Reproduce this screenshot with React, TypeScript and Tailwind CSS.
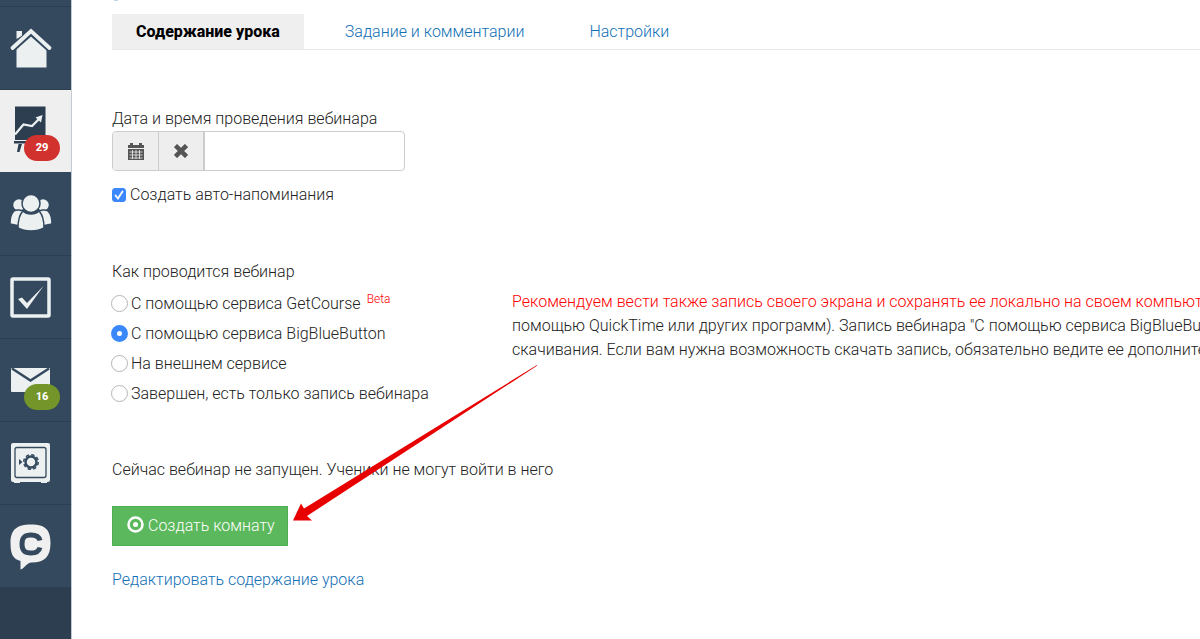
import React, { useState } from 'react';
import { twMerge } from 'tailwind-merge';

interface NavItemProps {
    label: string;
    active?: boolean;
    badge?: number;
    badgeStyles?: string;
    children: React.ReactNode;
}

const NavItem = ({ label, active, badge, badgeStyles, children }: NavItemProps) => (
    <a
        href="#"
        aria-label={label}
        className={twMerge("relative flex h-[83px] items-center border-b border-[#2b3d4f] bg-[#34495e] pl-[10px]", active && "border-[#34495e] bg-[#efefef]")}
    >
        <svg width="42" height="42" viewBox="0 0 42 42" fill="none" className="overflow-visible">
            {children}
        </svg>
        {badge !== undefined && (
            <span className={twMerge("absolute top-[45px] left-6 flex h-[26px] w-9 items-center justify-center rounded-full text-[11px] font-extrabold text-white", badgeStyles)}>
                {badge}
            </span>
        )}
    </a>
);

const Sidebar = () => (
    <nav className="w-[72px] shrink-0 border-r border-[#c3cad1] bg-[#2c3e50]">
        <div className="h-[7px] border-b border-[#2b3d4f] bg-[#34495e]" />
        <NavItem label="Главная">
            <path d="M6.500 12V4h5.500v5z" fill="#ecf0f1" />
            <path d="M6.500 20 21 6l15.500 14v20.500h-30z" fill="#ecf0f1" />
            <path d="M2.500 21.500 21 5l18.500 16.500" stroke="#34495e" strokeWidth="7" />
            <path d="M2.500 21 21 4l18.500 17" stroke="#ecf0f1" strokeWidth="3.800" strokeLinecap="round" />
        </NavItem>
        <NavItem label="Обучение" active badge={29} badgeStyles="bg-[#d2322d]">
            <path d="M5-3.500h30.500V30H5zM4 31h32v2.500H4zM8.500 34H12l-2.500 8H7z" fill="#2c3e50" />
            <path d="m5 24.500 8.500-10 8.500 1.500 8-8" stroke="#ecf0f1" strokeWidth="2.200" />
            <path d="m25.500 7.500 7-2.500-1.500 7.500z" fill="#ecf0f1" />
        </NavItem>
        <NavItem label="Пользователи">
            <g fill="#ecf0f1" stroke="#34495e" strokeWidth="1.500" transform="translate(0 -2)">
                <circle cx="9" cy="14" r="6.500" />
                <circle cx="33" cy="14" r="6.500" />
                <path d="M4 20c3-2 8-1 10 1l-4 14-10-2c0-6 1-10 4-13zM38 20c-3-2-8-1-10 1l4 14 10-2c0-6-1-10-4-13z" />
                <path d="M13 20c4 4 12 4 16 0 4 4 5 11 5 17-7 4-19 4-26 0 0-6 1-13 5-17z" />
                <circle cx="21" cy="12.500" r="9" />
            </g>
        </NavItem>
        <NavItem label="Задачи">
            <rect x="2" y="3" width="37" height="37" rx="1" stroke="#ecf0f1" strokeWidth="3.500" />
            <path d="m8 23 4-1.500 5 5.500L33.500 10 17 33z" fill="#ecf0f1" />
        </NavItem>
        <NavItem label="Сообщения" badge={16} badgeStyles="bg-[#739529]">
            <rect x="1" y="9" width="39" height="24" rx="1" fill="#ecf0f1" />
            <path d="m2 9.500 18.500 12L39 9.500" stroke="#34495e" strokeWidth="2.500" />
        </NavItem>
        <NavItem label="Финансы">
            <path d="M3 1h35a2 2 0 0 1 2 2v35a2 2 0 0 1-2 2h-1v1h-6v-1H10v1H4v-1H3a2 2 0 0 1-2-2V3a2 2 0 0 1 2-2z" fill="#ecf0f1" />
            <rect x="5" y="5.500" width="31" height="30" rx="2" stroke="#34495e" strokeWidth="1.300" />
            <path d="m9 17 3.500 3L9 23z" fill="#34495e" />
            <circle cx="21" cy="20" r="5.500" stroke="#34495e" strokeWidth="2.500" />
            <circle cx="21" cy="20" r="7.300" stroke="#34495e" strokeWidth="1.500" strokeDasharray="3.400 2.334" />
        </NavItem>
        <NavItem label="Чат">
            <path d="M21-.500C35-.500 40.500 4.500 40.500 18c0 14-6 19.500-19 19.500C17 37.500 14 44 10.500 44.500V36C3 34 .5 29 .5 18 .5 4.500 7-.500 21-.500z" fill="#f0f0f0" />
            <path d="M30 15.500c-1-4-4-5.500-9-5.500-6.500 0-9 2.500-9 9s2.500 9 9 9c5 0 8-1.500 9-5.500" stroke="#34495e" strokeWidth="5" />
        </NavItem>
    </nav>
);

const tabs = ["Содержание урока", "Задание и комментарии", "Настройки"];

const services = [
    { id: "getcourse", label: "С помощью сервиса GetCourse", beta: true },
    { id: "bbb", label: "С помощью сервиса BigBlueButton" },
    { id: "external", label: "На внешнем сервисе" },
    { id: "finished", label: "Завершен, есть только запись вебинара" },
];

const Arrow = () => (
    <svg className="pointer-events-none absolute top-[105px] left-[181px]" width="245" height="157" fill="#e80000" aria-hidden="true">
        <path d="M244 0 11 143.500l-3-5L0 155.500h19l-5-4.500L244 .700z" />
    </svg>
);

const App = () => {
    const [service, setService] = useState("bbb");
    const [reminders, setReminders] = useState(true);

    return (
        <div className="flex min-h-screen overflow-hidden bg-white font-['Roboto',sans-serif] text-base leading-6 font-light text-[#222]">
            <Sidebar />
            <main className="min-w-0 flex-1 pl-10">
                <svg className="block" width="8" height="14" fill="none" stroke="#a9cbe6" aria-hidden="true">
                    <path d="M2 0q2 1 4 0" />
                </svg>
                <nav className="flex gap-[17px] border-b border-[#e8e8e8]">
                    {tabs.map((tab, index) => (
                        <a
                            key={tab}
                            href="#"
                            className={twMerge("h-[35px] px-6 leading-[35px] text-[#1270b5]", index === 0 && "bg-[#efefef] font-extrabold text-black")}
                        >
                            {tab}
                        </a>
                    ))}
                </nav>

                <form onSubmit={(e) => e.preventDefault()}>
                    <label htmlFor="webinar-date" className="mt-[57px] block">Дата и время проведения вебинара</label>
                    <div className="flex h-10 w-[293px] overflow-hidden rounded border border-[#ccc]">
                        <button type="button" aria-label="Выбрать дату" className="flex w-[46px] items-center justify-center border-r border-[#ccc] bg-[#eee]">
                            <svg width="16" height="17" viewBox="0 0 16 17" fill="#555">
                                <path d="M0 2h2V0h3v2h6V0h3v2h2v3H0zM0 6h16v11H0z" />
                                <path d="M1.500 9h13M1.500 12h13M1.500 15h13M4.500 7v9M8 7v9M11.500 7v9" stroke="#eee" strokeWidth=".8" />
                            </svg>
                        </button>
                        <button type="button" aria-label="Очистить" className="flex w-[46px] items-center justify-center border-r-2 border-[#ccc] bg-[#eee]">
                            <svg width="14" height="14" viewBox="0 0 14 14" stroke="#555" strokeWidth="4.500">
                                <path d="m1.500 1.500 11 11M12.500 1.500l-11 11" />
                            </svg>
                        </button>
                        <input id="webinar-date" type="text" className="min-w-0 flex-1 px-3 outline-none" />
                    </div>
                    <label className="mt-3 flex items-center gap-1">
                        <span className="relative flex">
                            <input
                                type="checkbox"
                                checked={reminders}
                                onChange={(e) => setReminders(e.target.checked)}
                                className="peer size-[14px] appearance-none rounded-[3px] border border-[#bbb] checked:border-[#3b88fd] checked:bg-[#3b88fd]"
                            />
                            <svg className="pointer-events-none absolute inset-0 hidden peer-checked:block" width="14" height="14" fill="none" stroke="#fff" strokeWidth="1.800" strokeLinecap="round">
                                <path d="m3.500 7.500 2.500 3 4.500-7" />
                            </svg>
                        </span>
                        Создать авто-напоминания
                    </label>

                    <div className="relative mt-[53px]">
                        <fieldset className="grid grid-cols-[400px_1fr]">
                            <legend>Как проводится вебинар</legend>
                            <div className="-ml-px flex flex-col gap-[5px] pt-[7px]">
                                {services.map(({ id, label, beta }) => (
                                    <label key={id} className="flex h-[25px] items-center gap-[3px]">
                                        <input
                                            type="radio"
                                            name="service"
                                            checked={service === id}
                                            onChange={() => setService(id)}
                                            className="size-[17px] appearance-none rounded-full border border-[#b5b5b5] bg-white checked:border-[6px] checked:border-[#3b88fd]"
                                        />
                                        <span>{label}{beta && <sup className="ml-1.5 text-xs text-[#f00]">Beta</sup>}</span>
                                    </label>
                                ))}
                            </div>
                            <div className="pt-[6px] whitespace-nowrap">
                                <p className="text-[#f00]">Рекомендуем вести также запись своего экрана и сохранять ее локально на своем компьютере (с</p>
                                <p>помощью QuickTime или других программ). Запись вебинара "С помощью сервиса BigBlueButton" недоступна для</p>
                                <p>скачивания. Если вам нужна возможность скачать запись, обязательно ведите ее дополнительно</p>
                            </div>
                        </fieldset>

                        <p className="mt-[52px]">Сейчас вебинар не запущен. Ученики не могут войти в него</p>
                        <button type="submit" className="mt-6 flex h-10 items-center gap-1 border border-[#4cae4c] bg-[#5cb85c] pr-3 pl-[14px] text-white">
                            <svg className="mb-1" width="17" height="17" fill="none" stroke="#fff" strokeWidth="2.500">
                                <circle cx="8.500" cy="8.500" r="7" />
                                <circle cx="8.500" cy="8.500" r="2.500" fill="#fff" stroke="none" />
                            </svg>
                            Создать комнату
                        </button>
                        <Arrow />
                    </div>
                    <a href="#" className="mt-[22px] inline-block text-[#1270b5]">Редактировать содержание урока</a>
                </form>
            </main>
        </div>
    );
};

export default App;
